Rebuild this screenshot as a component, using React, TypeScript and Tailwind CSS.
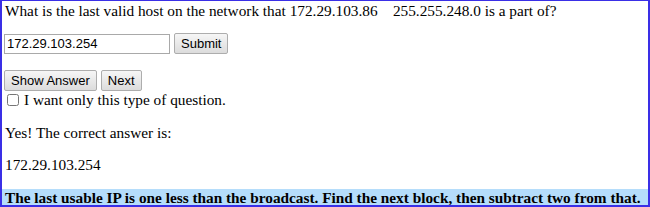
import React from "react";

export default function App() {
  const btn =
    "px-[6px] h-[21px] text-[13px] leading-none text-black bg-gradient-to-b from-[#f6f6f6] to-[#dcdcdc] border border-[#adadad] rounded-[2px] font-['Liberation_Sans',Arial,sans-serif]";

  return (
    <div className="w-[650px] h-[207px] overflow-hidden bg-white border-2 border-t border-[#3a2fe6] font-['Liberation_Serif','Times_New_Roman',serif] text-[15.3px] text-black">
      <div className="pl-[3px] pt-[1px] leading-[18px]">
        What is the last valid host on the network that 172.29.103.86&nbsp;&nbsp;&nbsp;&nbsp;255.255.248.0 is a part of?
      </div>

      <div className="flex items-center gap-[4px] pl-[2px] mt-[13px]">
        <input
          type="text"
          defaultValue="172.29.103.254"
          className="w-[166px] h-[20px] px-[2px] text-[13px] border border-[#a9a9a9] font-['Liberation_Sans',Arial,sans-serif] outline-none"
        />
        <button className={btn}>Submit</button>
      </div>

      <div className="flex items-center gap-[4px] pl-[2px] mt-[16px]">
        <button className={btn}>Show Answer</button>
        <button className={btn}>Next</button>
      </div>

      <label className="flex items-center pl-[5px] leading-[17px]">
        <input type="checkbox" className="w-[12px] h-[12px] mr-[5px] mt-[1px]" />
        I want only this type of question.
      </label>

      <p className="pl-[3px] mt-[16px] leading-[17px]">Yes! The correct answer is:</p>
      <p className="pl-[3px] mt-[15px] leading-[17px]">172.29.103.254</p>

      <div className="mt-[16px] bg-[#b5ddfb] pl-[3px] h-[17px] leading-[17px] font-bold whitespace-nowrap">
        The last usable IP is one less than the broadcast. Find the next block, then subtract two from that.
      </div>
    </div>
  );
}
